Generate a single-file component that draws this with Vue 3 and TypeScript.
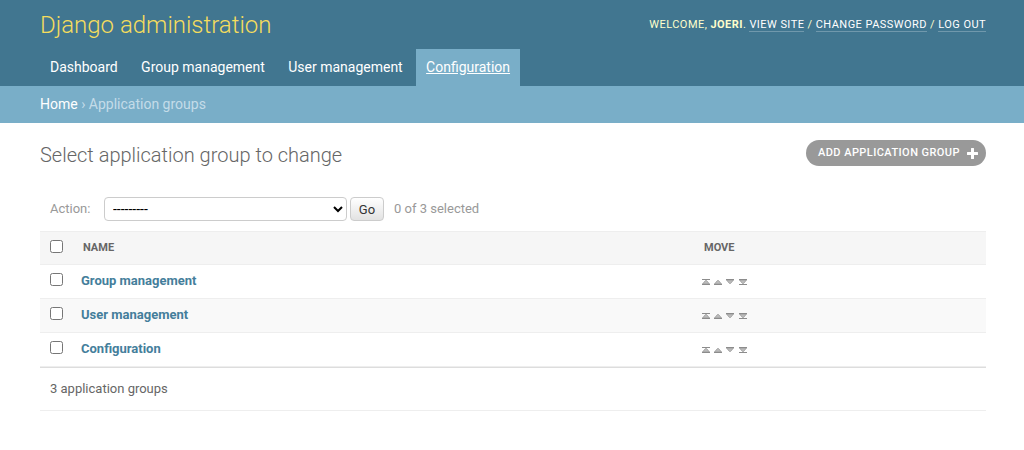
<script setup lang="ts">
import { ref } from 'vue'

const tabs: string[] = ['Dashboard', 'Group management', 'User management', 'Configuration']
const groups: string[] = ['Group management', 'User management', 'Configuration']
const action = ref('')
</script>

<template>
  <div class="page">
    <header class="header">
      <div class="branding">Django administration</div>
      <div class="user-tools">Welcome, <strong>Joeri</strong>. <a>View site</a> / <a>Change password</a> / <a>Log out</a></div>
      <nav class="tabs">
        <a v-for="tab in tabs" :key="tab" :class="{ active: tab === 'Configuration' }">{{ tab }}</a>
      </nav>
    </header>
    <div class="breadcrumbs"><a>Home</a> › Application groups</div>
    <main class="content">
      <div class="title-row">
        <h1>Select application group to change</h1>
        <a class="add"><span>Add application group</span>
          <svg width="13" height="13" viewBox="0 0 13 13"><path d="M5.500 1h2q.5 0 .5.5V5h3.500q.5 0 .5.5v2q0 .5-.5.5H8v3.500q0 .5-.5.5h-2q-.5 0-.5-.5V8H1.500Q1 8 1 7.500v-2Q1 5 1.500 5H5V1.500q0-.5.5-.5z" fill="#fff" /></svg>
        </a>
      </div>
      <div class="actions">
        <label>Action:</label>
        <select v-model="action"><option value="">---------</option></select>
        <button>Go</button>
        <span>0 of 3 selected</span>
      </div>
      <div class="row head">
        <input type="checkbox" /><span class="name">Name</span><span class="move">Move</span>
      </div>
      <div v-for="group in groups" :key="group" class="row">
        <input type="checkbox" /><a class="name">{{ group }}</a>
        <span class="move">
          <svg width="48" height="8" viewBox="0 0 48 8">
            <path d="M1.500 6L4.500 2.500h1L8.500 6zM13.500 6l3-3.500h1l3 3.500zM25.500 2h7l-3 3.500h-1zM38.500 2h7l-3 3.500h-1z" fill="#bbb" stroke="#999" stroke-width=".8" />
            <path d="M1 1h8v1H1zM1 6h8v1H1zM13 6h8v1h-8zM25 1h8v1h-8zM38 1h8v1h-8zM38 6h8v1h-8z" fill="#8c8c8c" />
          </svg>
        </span>
      </div>
      <div class="paginator">3 application groups</div>
    </main>
  </div>
</template>

<style>
body { margin: 0; background: #fff; }
</style>

<style scoped>
.page { font-family: Roboto, "Liberation Sans", sans-serif; font-size: 13px; color: #666; height: 450px; overflow: hidden; }
.header { height: 86px; background: #417690; display: grid; grid-template: 49px 37px / 1fr auto; padding: 0 38px 0 40px; box-sizing: border-box; }
.branding { font-size: 24px; font-weight: 300; color: #f5dd5d; line-height: 51px; height: 49px; }
.user-tools { font-size: 11px; font-weight: 400; color: #ffc; text-transform: uppercase; letter-spacing: .45px; line-height: 14px; padding-top: 18px; }
.user-tools strong { font-weight: 700; }
.user-tools a { color: #fff; border-bottom: 1px solid rgba(255,255,255,.25); }
.tabs { grid-column: 1 / 3; display: flex; gap: 3.4px; }
.tabs a { padding: 0 10px; line-height: 36px; font-size: 14px; color: #fff; }
.tabs .active { background: #79aec8; text-decoration: underline; }
.breadcrumbs { height: 37px; line-height: 37px; padding-left: 40px; background: #79aec8; color: #c4dce8; font-size: 14px; }
.breadcrumbs a { color: #fff; }
.content { padding: 17px 38px 0 40px; }
.title-row { display: flex; justify-content: space-between; height: 57px; }
h1 { margin: 4px 0 0; font-size: 20px; line-height: 23px; font-weight: 300; color: #666; }
.add { height: 26px; width: 180px; box-sizing: border-box; border-radius: 13px; background: #999; color: #fff; font-size: 11px; font-weight: 500; letter-spacing: .44px; text-transform: uppercase; display: flex; align-items: center; justify-content: space-between; padding: 0 7px 0 12px; }
.add span { line-height: 24px; padding-bottom: 1px; white-space: nowrap; }
.actions { height: 34px; display: flex; padding-left: 10px; color: #999; line-height: 24px; }
.actions label { width: 54px; }
select { width: 243px; height: 24px; margin: 0; padding: 0 5px 0 4px; font: 14px Roboto, sans-serif; border: 1px solid #ccc; border-radius: 4px; background: #fff; color: #000; }
button { width: 34px; height: 24px; margin: 0 10px 0 3px; padding: 0; font: 13px Roboto, sans-serif; border: 1px solid #ccc; border-radius: 4px; background: linear-gradient(#fff, #e2e2e2); color: #333; }
.row { height: 34px; box-sizing: border-box; border-bottom: 1px solid #eee; display: grid; grid-template-columns: 41px 620px 1fr; line-height: 32px; }
.row input { width: 13px; height: 13px; margin: 8px 0 0 10px; }
.row a { font-weight: 700; color: #447e9b; }
.row:nth-of-type(5) { background: #f9f9f9; }
.head { background: #f6f6f6; border-top: 1px solid #eee; font-size: 11px; font-weight: 700; text-transform: uppercase; }
.head span { padding-left: 2px; }
.head .move { padding-left: 3px; }
.move svg { display: block; margin-top: 13px; }
.paginator { height: 44px; box-sizing: border-box; border-top: 1px solid #ddd; border-bottom: 1px solid #eee; padding-left: 10px; line-height: 41px; }
</style>
